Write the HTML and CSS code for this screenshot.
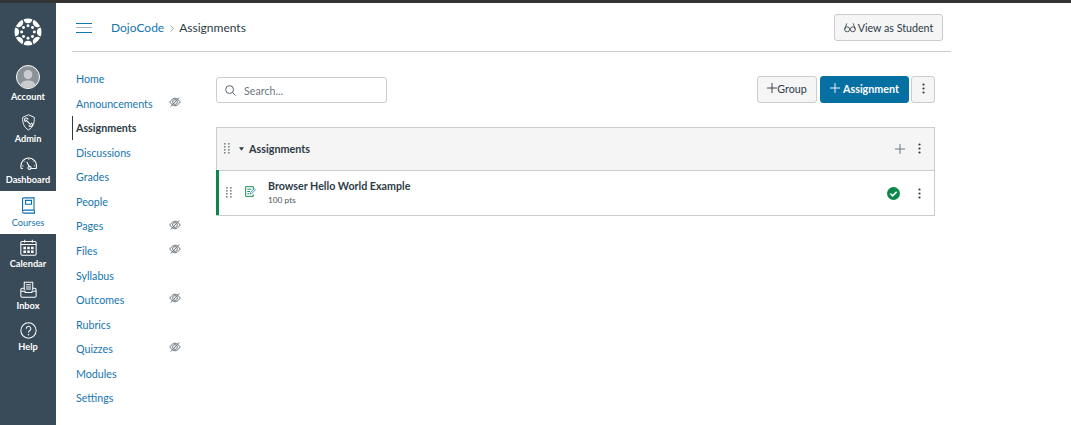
FILE: index.html
```html
<!DOCTYPE html>
<html lang="en">
<head>
<meta charset="utf-8">
<title>Assignments</title>
<link rel="stylesheet" href="styles.css">
</head>
<body>
<svg class="defs" width="0" height="0" aria-hidden="true">
  <defs>
    <g id="eye" fill="none" stroke="#6b7780" stroke-width="1">
      <path d="M.7 6C2.600 3.400 4.600 2.200 6 2.200S9.400 3.400 11.300 6C9.400 8.600 7.400 9.800 6 9.800S2.600 8.600 .7 6Z"/>
      <circle cx="6" cy="6" r="2.400"/>
      <path d="M1.800 10.600 10.200 1.400"/>
    </g>
    <g id="dots" fill="#2d3b45">
      <circle cx="1.500" cy="1.500" r="1.100"/><circle cx="1.500" cy="5.500" r="1.100"/><circle cx="1.500" cy="9.500" r="1.100"/>
    </g>
    <g id="grip" fill="#7b868e">
      <rect x="0" y="0" width="1.600" height="1.600"/><rect x="4" y="0" width="1.600" height="1.600"/>
      <rect x="0" y="3" width="1.600" height="1.600"/><rect x="4" y="3" width="1.600" height="1.600"/>
      <rect x="0" y="6" width="1.600" height="1.600"/><rect x="4" y="6" width="1.600" height="1.600"/>
      <rect x="0" y="9" width="1.600" height="1.600"/><rect x="4" y="9" width="1.600" height="1.600"/>
    </g>
  </defs>
</svg>
<div class="topline"></div>
<div class="app">
  <nav class="global">
    <div class="logo">
      <svg width="28" height="28" viewBox="0 0 30 30" fill="#fff">
        <path d="M5.500 15a4.800 4.800 0 0 0-4.200-4.700A15 15 0 0 0 .6 15c0 1.600.2 3.200.7 4.700A4.800 4.800 0 0 0 5.500 15Z"/>
        <circle cx="8.200" cy="15" r="1.600"/>
        <path d="M24.500 15a4.800 4.800 0 0 0 4.200 4.700c.5-1.500.7-3.100.7-4.700s-.2-3.200-.7-4.700A4.800 4.800 0 0 0 24.500 15Z"/>
        <circle cx="21.800" cy="15" r="1.600"/>
        <path d="M15 5.500a4.800 4.800 0 0 0 4.700-4.200A15 15 0 0 0 15 .6c-1.600 0-3.200.2-4.700.7A4.800 4.800 0 0 0 15 5.500Z"/>
        <circle cx="15" cy="8.200" r="1.600"/>
        <path d="M15 24.500a4.800 4.800 0 0 0-4.700 4.200c1.500.5 3.100.7 4.700.7s3.200-.2 4.700-.7A4.800 4.800 0 0 0 15 24.500Z"/>
        <circle cx="15" cy="21.800" r="1.600"/>
        <path d="M8.300 8.300a4.800 4.800 0 0 0 .5-6.300A15 15 0 0 0 2 8.800a4.800 4.800 0 0 0 6.300-.5Z"/>
        <circle cx="10.200" cy="10.200" r="1.600"/>
        <path d="M21.700 21.700a4.800 4.800 0 0 0-.5 6.300 15 15 0 0 0 6.800-6.800 4.800 4.800 0 0 0-6.300.5Z"/>
        <circle cx="19.800" cy="19.800" r="1.600"/>
        <path d="M21.700 8.300a4.800 4.800 0 0 0 6.300.5A15 15 0 0 0 21.200 2a4.800 4.800 0 0 0 .5 6.300Z"/>
        <circle cx="19.800" cy="10.200" r="1.600"/>
        <path d="M8.300 21.700a4.800 4.800 0 0 0-6.300-.5A15 15 0 0 0 8.800 28a4.800 4.800 0 0 0-.5-6.300Z"/>
        <circle cx="10.200" cy="19.800" r="1.600"/>
      </svg>
    </div>
    <a class="gitem account">
      <svg class="avatar" width="24" height="24" viewBox="0 0 24 24">
        <circle cx="12" cy="12" r="11.500" fill="#8a9298" stroke="#fff"/>
        <path d="M12 5a4.300 4.300 0 0 1 4.300 4.600c0 2.500-1.500 4.600-4.300 4.600S7.700 12.100 7.700 9.600A4.300 4.300 0 0 1 12 5ZM4.600 19.800c.8-3 4-4.300 7.400-4.300s6.600 1.300 7.400 4.300A11 11 0 0 1 12 23a11 11 0 0 1-7.400-3.200Z" fill="#c9cdd0"/>
      </svg>
      <span>Account</span>
    </a>
    <a class="gitem">
      <svg viewBox="0 0 20 22" fill="none" stroke="#fff" stroke-width="1.200">
        <path d="M10 1 17.500 4.300C18 11 16 17.500 10 20.500 4 17.500 2 11 2.500 4.300Z"/>
        <path d="M6.500 7.500 13 14M6.800 9.800a2.300 2.300 0 1 1 2.600-2.600M13.200 11.700a2.300 2.300 0 1 1-2.600 2.600" stroke-width="1.400"/>
      </svg>
      <span>Admin</span>
    </a>
    <a class="gitem">
      <svg viewBox="0 .5 19.500 19.500" fill="none" stroke="#fff" stroke-width="1.200">
        <path d="M3.200 16H1.500A9 9 0 0 1 1 13a9 9 0 0 1 18 0 9 9 0 0 1-.5 3h-6.300"/>
        <path d="M7.800 8.500 11 14.500M9.200 15.500a1.800 1.800 0 1 0 2.600-1.900 1.800 1.800 0 0 0-2.600 1.900Z"/>
        <path d="M4 13H2.500M5.500 8 4.500 7M10 6V4.800M15 8l1-1M16 13h1.500" stroke-width="1"/>
      </svg>
      <span>Dashboard</span>
    </a>
    <a class="gitem active">
      <svg viewBox="0 0 16 20" fill="none" stroke="#0f6fab" stroke-width="1.300">
        <path d="M2.500 1h12v14.500h-12A1.700 1.700 0 0 0 1 17.200V2.500A1.500 1.500 0 0 1 2.500 1Z"/>
        <path d="M1 17.200A1.700 1.700 0 0 0 2.700 19H15v-3.500"/>
        <path d="M4.500 4h7v4.500h-7Z"/>
      </svg>
      <span>Courses</span>
    </a>
    <a class="gitem">
      <svg viewBox="0 0 20 20">
        <path d="M2.500 3h15A1.500 1.500 0 0 1 19 4.500v13a1.500 1.500 0 0 1-1.500 1.500h-15A1.500 1.500 0 0 1 1 17.500v-13A1.500 1.500 0 0 1 2.500 3Z" fill="none" stroke="#fff" stroke-width="1.200"/>
        <path d="M1 6.500h18M5.500 1v3.500M14.500 1v3.500" stroke="#fff" stroke-width="1.200" fill="none"/>
        <path d="M4 9h3v3H4ZM8.500 9h3v3h-3ZM13 9h3v3h-3ZM4 13.500h3v3H4ZM8.500 13.500h3v3h-3ZM13 13.500h3v3h-3Z" fill="#fff"/>
      </svg>
      <span>Calendar</span>
    </a>
    <a class="gitem">
      <svg viewBox="0 0 20 20" fill="none" stroke="#fff" stroke-width="1.200">
        <path d="M5 11V1.500h10V11"/>
        <path d="M7 4.500h6M7 7h6M7 9.500h6"/>
        <path d="M5 8.500H3A2 2 0 0 0 1 10.500v7A1.500 1.500 0 0 0 2.500 19h15a1.500 1.500 0 0 0 1.500-1.500v-7a2 2 0 0 0-2-2h-2"/>
        <path d="M1 12h5v1.500h8V12h5"/>
      </svg>
      <span>Inbox</span>
    </a>
    <a class="gitem">
      <svg viewBox="0 0 20 20" fill="none" stroke="#fff" stroke-width="1.200">
        <circle cx="10" cy="10" r="9"/>
        <path d="M7.300 7.800a2.700 2.700 0 1 1 4.300 2.200c-1 .7-1.600 1.200-1.600 2.500"/>
        <circle cx="10" cy="15" r=".9" fill="#fff" stroke="none"/>
      </svg>
      <span>Help</span>
    </a>
  </nav>
  <div class="content">
    <header class="crumbs">
      <button class="burger" aria-label="Menu"><i></i><i></i><i></i></button>
      <a class="crumb-link">DojoCode</a>
      <svg class="chev" width="4" height="7" viewBox="0 0 4 7" fill="none" stroke="#8b969e" stroke-width=".8"><path d="M.5.5 3.500 3.500.5 6.500"/></svg>
      <span class="crumb-here">Assignments</span>
      <button class="btn student">
        <svg width="12" height="11" viewBox="0 0 13 12" fill="none" stroke="#2d3b45" stroke-width=".9"><circle cx="3.400" cy="8" r="2.700"/><circle cx="9.600" cy="8" r="2.700"/><path d="M6.100 8h.8M.7 8 3 1.500M12.300 8 10 1.500"/></svg>
        View as Student
      </button>
    </header>
    <div class="below">
      <ul class="course-nav">
        <li><a>Home</a></li>
        <li><a>Announcements</a><svg class="eye" width="12" height="12" viewBox="0 0 12 12"><use href="#eye"/></svg></li>
        <li class="current"><a>Assignments</a></li>
        <li><a>Discussions</a></li>
        <li><a>Grades</a></li>
        <li><a>People</a></li>
        <li><a>Pages</a><svg class="eye" width="12" height="12" viewBox="0 0 12 12"><use href="#eye"/></svg></li>
        <li><a>Files</a><svg class="eye" width="12" height="12" viewBox="0 0 12 12"><use href="#eye"/></svg></li>
        <li><a>Syllabus</a></li>
        <li><a>Outcomes</a><svg class="eye" width="12" height="12" viewBox="0 0 12 12"><use href="#eye"/></svg></li>
        <li><a>Rubrics</a></li>
        <li><a>Quizzes</a><svg class="eye" width="12" height="12" viewBox="0 0 12 12"><use href="#eye"/></svg></li>
        <li><a>Modules</a></li>
        <li><a>Settings</a></li>
      </ul>
      <main class="main">
        <div class="toolbar">
          <label class="search">
            <svg width="11" height="11" viewBox="0 0 12 12" fill="none" stroke="#4a5760"><circle cx="5" cy="5" r="4.300"/><path d="M8.200 8.200 11.500 11.500"/></svg>
            <span>Search...</span>
          </label>
          <div class="actions">
            <button class="btn group">
              <svg width="10" height="10" viewBox="0 0 11 11" stroke="#2d3b45"><path d="M5.500 0v11M0 5.500h11"/></svg>Group
            </button>
            <button class="btn primary">
              <svg width="10" height="10" viewBox="0 0 11 11" stroke="#fff"><path d="M5.500 0v11M0 5.500h11"/></svg>Assignment
            </button>
            <button class="btn kebab" aria-label="More"><svg width="3" height="11" viewBox="0 0 3 11"><use href="#dots"/></svg></button>
          </div>
        </div>
        <section class="agroup">
          <div class="ghead">
            <svg class="grip" width="6" height="11" viewBox="0 0 6 11"><use href="#grip"/></svg>
            <svg class="caret" width="5" height="4" viewBox="0 0 6 4" fill="#2d3b45"><path d="M0 0h6L3 4Z"/></svg>
            <h2>Assignments</h2>
            <svg class="add" width="10" height="10" viewBox="0 0 10 10" stroke="#6b7780"><path d="M5 0v10M0 5h10"/></svg>
            <svg class="more" width="3" height="11" viewBox="0 0 3 11"><use href="#dots"/></svg>
          </div>
          <div class="row">
            <svg class="grip" width="6" height="11" viewBox="0 0 6 11"><use href="#grip"/></svg>
            <svg class="doc" width="11" height="11" viewBox="0 0 12 12" fill="none" stroke="#0b874b"><path d="M9 3.500V.7H.7v10.600H9V9"/><path d="M2.500 3.500h4.500M2.500 6h3M2.500 8.500h2"/><path d="M5.500 8.800 6 7l4.200-4.200 1.200 1.200L7.300 8.300Z" stroke="#3d8fb5"/></svg>
            <div class="rowtext">
              <a class="title">Browser Hello World Example</a>
              <span class="pts">100 pts</span>
            </div>
            <svg class="ok" width="13" height="13" viewBox="0 0 13 13"><circle cx="6.500" cy="6.500" r="6.500" fill="#0b874b"/><path d="M3.400 6.700 5.600 8.800 9.700 4.700" fill="none" stroke="#fff" stroke-width="1.600"/></svg>
            <svg class="more rowmore" width="3" height="11" viewBox="0 0 3 11"><use href="#dots"/></svg>
          </div>
        </section>
      </main>
    </div>
  </div>
</div>
</body>
</html>
```
FILE: styles.css
```css
* { box-sizing: border-box; }
html, body { margin: 0; height: 100%; }
body {
  font-family: Lato, "Liberation Sans", sans-serif;
  color: #2d3b45;
  background: #fff;
  overflow: hidden;
}
.defs { display: block; height: 0; }
.topline { height: 3px; background: #333; }
.app { display: flex; height: 422px; }

.global {
  width: 56px;
  flex: none;
  background: #394b58;
  display: flex;
  flex-direction: column;
}
.logo { height: 58px; display: flex; align-items: center; justify-content: center; }
.gitem {
  height: 41.600px;
  display: flex;
  flex-direction: column;
  align-items: center;
  padding-top: 5.500px;
  color: #fff;
  font-size: 9.200px;
  font-weight: 700;
}
.gitem svg { width: 17px; height: 17px; flex: none; }
.gitem span { margin-top: auto; padding-bottom: 5px; line-height: 12px; }
.gitem.account { height: 47px; padding-top: 4px; }
.gitem .avatar { width: 24px; height: 24px; }
.gitem.active { height: 42.400px; background: #fff; color: #1675b0; font-weight: 400; }

.content { width: 879px; margin-left: 16px; display: flex; flex-direction: column; }
.crumbs {
  height: 49px;
  border-bottom: 1px solid #c7cdd1;
  display: flex;
  align-items: center;
  padding: 1px 8px 0 4px;
  font-size: 12px;
}
.burger {
  width: 16px;
  height: 10px;
  padding: 0;
  border: 0;
  background: none;
  display: flex;
  flex-direction: column;
  justify-content: space-between;
  margin-right: 19px;
}
.burger i { display: block; height: 1px; background: #1675b0; }
.burger i:nth-child(2) { background: #9fb9c9; }
.crumb-link { color: #1675b0; }
.chev { margin: 1px 5px 0 6px; }
.btn {
  font-family: inherit;
  font-size: 10.700px;
  color: #2d3b45;
  background: #f5f5f5;
  border: 1px solid #c7cdd1;
  border-radius: 3px;
  display: inline-flex;
  align-items: center;
  justify-content: center;
  padding: 0;
}
.student { margin-left: auto; width: 109px; height: 27px; gap: 2px; margin-top: -1px; }

.below { display: flex; flex: 1; }
.course-nav {
  list-style: none;
  margin: 14.500px 0 0;
  padding: 0;
  width: 144px;
  flex: none;
  font-size: 10.700px;
}
.course-nav li {
  height: 24.540px;
  display: flex;
  align-items: center;
  position: relative;
  border-left: 1px solid transparent;
  padding-left: 3px;
  width: 110px;
}
.course-nav a { color: #1675b0; }
.course-nav .current { border-left-color: #2d3b45; }
.course-nav .current a { color: #2d3b45; font-weight: 700; }
.eye { position: absolute; left: 95.500px; top: 5px; }

.main { width: 719px; }
.toolbar { display: flex; justify-content: space-between; margin-top: 24px; height: 27px; }
.search {
  width: 171px;
  height: 26px;
  margin-top: 1px;
  border: 1px solid #c7cdd1;
  border-radius: 3px;
  display: flex;
  align-items: center;
  gap: 8px;
  padding-left: 8px;
  font-size: 10.700px;
  color: #6b7780;
}
.actions { display: flex; gap: 3px; }
.actions .btn { height: 27px; padding-bottom: 3px; }
.group { width: 60px; }
.primary { width: 89px; background: #0770a3; border-color: #0770a3; color: #fff; gap: 3px; font-weight: 700; }
.kebab { width: 24px; margin-left: -1px; }

.agroup { margin-top: 24px; border: 1px solid #c7cdd1; }
.ghead {
  height: 43px;
  background: #f5f5f5;
  border-bottom: 1px solid #c7cdd1;
  display: flex;
  align-items: center;
  padding: 0 13px 1px 7px;
}
.ghead h2 { margin: 0 0 0 5px; font-size: 10.800px; font-weight: 700; }
.caret { margin-left: 9px; }
.add { margin-left: auto; margin-right: 13px; }
.row {
  height: 45px;
  margin-top: -1px;
  border-left: 3px solid #0b874b;
  margin-left: -1px;
  display: flex;
  align-items: center;
  padding: 0 13px 0 7px;
}
.doc { margin-left: 13px; margin-top: -2px; }
.rowtext { display: flex; flex-direction: column; margin-left: 12px; }
.title { font-size: 10.700px; font-weight: 700; line-height: 14px; }
.pts { font-size: 8.300px; line-height: 14px; color: #4a5760; }
.ok { margin-left: auto; margin-right: 18px; margin-top: 1px; }
.rowmore { margin-top: 1px; }
```
